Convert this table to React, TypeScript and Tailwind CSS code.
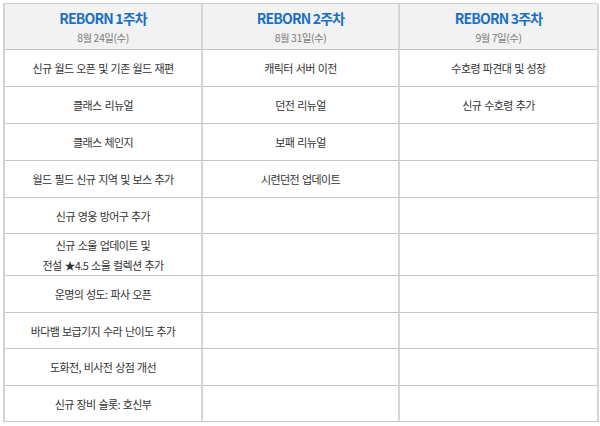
import React from 'react';

const weeks = [
  { title: 'REBORN 1주차', date: '8월 24일(수)' },
  { title: 'REBORN 2주차', date: '8월 31일(수)' },
  { title: 'REBORN 3주차', date: '9월 7일(수)' },
];

// each row: [week1, week2, week3], height class
const rows: { cells: React.ReactNode[]; h: string }[] = [
  { cells: ['신규 월드 오픈 및 기존 월드 재편', '캐릭터 서버 이전', '수호령 파견대 및 성장'], h: 'h-[37px]' },
  { cells: ['클래스 리뉴얼', '던전 리뉴얼', '신규 수호령 추가'], h: 'h-[37px]' },
  { cells: ['클래스 체인지', '보패 리뉴얼', ''], h: 'h-[37px]' },
  { cells: ['월드 필드 신규 지역 및 보스 추가', '시련던전 업데이트', ''], h: 'h-[37px]' },
  { cells: ['신규 영웅 방어구 추가', '', ''], h: 'h-[36px]' },
  {
    cells: [
      <>
        신규 소울 업데이트 및
        <br />
        전설 ★4.5 소울 컬렉션 추가
      </>,
      '',
      '',
    ],
    h: 'h-[42px]',
  },
  { cells: ['운명의 성도: 파사 오픈', '', ''], h: 'h-[37px]' },
  { cells: ['바다뱀 보급기지 수라 난이도 추가', '', ''], h: 'h-[36px]' },
  { cells: ['도화전, 비사전 상점 개선', '', ''], h: 'h-[37px]' },
  { cells: ['신규 장비 슬롯: 호신부', '', ''], h: 'h-[36px]' },
];

export default function App() {
  return (
    <div className="w-[600px] h-[426px] bg-white pt-[3px] pl-[3px] font-['Noto_Sans_CJK_KR','Noto_Sans',sans-serif]">
      <div className="w-[594px] border-t border-l-2 border-[#d2d2d2] grid grid-cols-[198px_197px_199px]">
        {/* Header */}
        {weeks.map((w) => (
          <div
            key={w.title}
            className="h-[46px] bg-[#f2f2f2] border-b border-b-[#c4c4c4] border-r-2 border-r-[#d6d6d6] flex flex-col items-center justify-center"
          >
            <div className="text-[14px] leading-[18px] font-bold text-[#1b6fc2] tracking-[-0.8px]">{w.title}</div>
            <div className="mt-[4px] text-[10.5px] leading-[14px] text-[#7a7a7a] tracking-[-0.5px]">{w.date}</div>
          </div>
        ))}

        {/* Body */}
        {rows.map((r, i) =>
          r.cells.map((c, j) => (
            <div
              key={`${i}-${j}`}
              className={`${r.h} border-b border-b-[#c4c4c4] border-r-2 border-r-[#d6d6d6] flex items-center justify-center text-center text-[11px] leading-[20px] text-[#333333] tracking-[-0.6px] [word-spacing:1px]`}
            >
              <div>{c}</div>
            </div>
          ))
        )}
      </div>
    </div>
  );
}
